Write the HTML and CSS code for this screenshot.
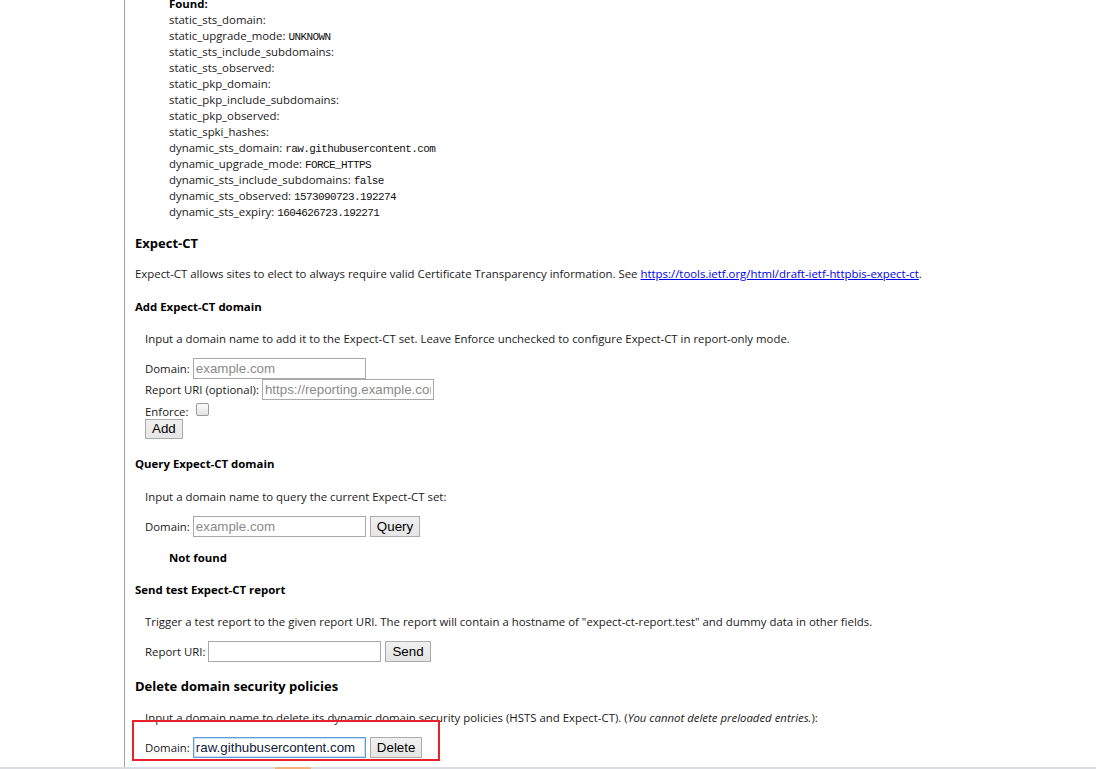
FILE: index.html
```html
<!DOCTYPE html>
<html lang="en">
<head>
<meta charset="utf-8">
<title>HSTS</title>
<link rel="stylesheet" href="styles.css">
</head>
<body>
<div class="frame">
  <aside class="sidebar"></aside>
  <main class="content">
    <div class="scroll">
      <div class="query-output">
        <div class="kv found">Found:</div>
        <div class="kv">static_sts_domain: </div>
        <div class="kv">static_upgrade_mode: <tt>UNKNOWN</tt></div>
        <div class="kv">static_sts_include_subdomains: </div>
        <div class="kv">static_sts_observed: </div>
        <div class="kv">static_pkp_domain: </div>
        <div class="kv">static_pkp_include_subdomains: </div>
        <div class="kv">static_pkp_observed: </div>
        <div class="kv">static_spki_hashes: </div>
        <div class="kv">dynamic_sts_domain: <tt>raw.githubusercontent.com</tt></div>
        <div class="kv">dynamic_upgrade_mode: <tt>FORCE_HTTPS</tt></div>
        <div class="kv">dynamic_sts_include_subdomains: <tt>false</tt></div>
        <div class="kv">dynamic_sts_observed: <tt>1573090723.192274</tt></div>
        <div class="kv">dynamic_sts_expiry: <tt>1604626723.192271</tt></div>
      </div>

      <h3 class="sec-title">Expect-CT</h3>
      <p class="sec-text">Expect-CT allows sites to elect to always require valid Certificate Transparency information. See <a class="link" href="#">https://tools.ietf.org/html/draft-ietf-httpbis-expect-ct</a>.</p>

      <h4 class="sub-title">Add Expect-CT domain</h4>
      <div class="sub-body">
        <p class="sub-text">Input a domain name to add it to the Expect-CT set. Leave Enforce unchecked to configure Expect-CT in report-only mode.</p>
        <div class="form">
          <div class="row">Domain: <input class="field" type="text" placeholder="example.com"></div>
          <div class="row">Report URI (optional): <input class="field field-uri" type="text" placeholder="https://reporting.example.com"></div>
          <div class="row row-check">Enforce: <input class="check" type="checkbox"></div>
          <div class="row row-btn"><button class="btn" type="button">Add</button></div>
        </div>
      </div>

      <h4 class="sub-title">Query Expect-CT domain</h4>
      <div class="sub-body">
        <p class="sub-text sub-text-loose">Input a domain name to query the current Expect-CT set:</p>
        <div class="form">
          <div class="row">Domain: <input class="field" type="text" placeholder="example.com"> <button class="btn" type="button">Query</button></div>
        </div>
        <div class="not-found">Not found</div>
      </div>

      <h4 class="sub-title sub-title-tight">Send test Expect-CT report</h4>
      <div class="sub-body">
        <p class="sub-text">Trigger a test report to the given report URI. The report will contain a hostname of "expect-ct-report.test" and dummy data in other fields.</p>
        <div class="form">
          <div class="row">Report URI: <input class="field" type="text"> <button class="btn" type="button">Send</button></div>
        </div>
      </div>

      <h3 class="sec-title sec-title-delete">Delete domain security policies</h3>
      <div class="sub-body">
        <p class="sub-text sub-text-delete">Input a domain name to delete its dynamic domain security policies (HSTS and Expect-CT). (<i>You cannot delete preloaded entries.</i>):</p>
        <div class="form">
          <div class="row row-annotated">Domain: <input class="field field-focus" type="text" value="raw.githubusercontent.com"> <button class="btn" type="button">Delete</button>
            <span class="annotation"></span>
          </div>
        </div>
      </div>
    </div>
  </main>
</div>
<div class="bottom-bar"><span class="bar-thumb"></span></div>
</body>
</html>
```

FILE: styles.css
```css
html, body {
  margin: 0;
  height: 100%;
  overflow: hidden;
  background: #ffffff;
}

body {
  display: flex;
  flex-direction: column;
  font-family: "Open Sans", "Segoe UI", "Noto Sans", sans-serif;
  font-size: 11.4px;
  line-height: 16px;
  color: #1a1a1a;
}

.frame {
  flex: 1;
  display: flex;
  min-height: 0;
}

.sidebar {
  flex: none;
  width: 124px;
  border-right: 1px solid #a3a3a3;
}

.content {
  flex: 1;
  min-width: 0;
  overflow: hidden;
  padding-left: 10px;
}

.scroll {
  margin-top: -4px;
}

.query-output {
  padding-left: 34px;
}

.kv {
  height: 16px;
  line-height: 16px;
  white-space: nowrap;
}

.found {
  font-weight: bold;
  color: #000;
}

tt {
  font-family: "Liberation Mono", "DejaVu Sans Mono", monospace;
  font-size: 11px;
  line-height: 0;
  letter-spacing: -0.6px;
  color: #111;
}

.sec-title {
  margin: 14px 0 0;
  font-size: 13px;
  font-weight: bold;
  line-height: 18px;
  color: #000;
}

.sec-title-delete {
  margin-top: 15px;
}

.sec-text {
  margin: 14px 0 0;
  white-space: nowrap;
}

.link {
  color: #0000ee;
  text-decoration: underline;
}

.sub-title {
  margin: 17px 0 0;
  font-size: 11.4px;
  font-weight: bold;
  line-height: 16px;
  color: #000;
}

.sub-title-tight {
  margin-top: 16px;
}

.sub-body {
  padding-left: 10px;
}

.sub-text {
  margin: 16px 0 0;
  white-space: nowrap;
}

.sub-text-loose {
  margin-top: 17px;
}

.sub-text-delete {
  margin-top: 15px;
}

.form {
  margin-top: 11px;
}

.row {
  display: flex;
  align-items: center;
  column-gap: 3px;
  height: 21px;
  white-space: nowrap;
}

.row-check {
  box-sizing: border-box;
  height: 19px;
  padding-top: 4px;
}

.row-btn {
  height: 20px;
}

.row-annotated {
  position: relative;
}

.field {
  box-sizing: border-box;
  width: 173px;
  height: 21px;
  margin: 0;
  padding: 1px 2px;
  border: 1px solid #a9a9a9;
  border-radius: 0;
  background: #fff;
  font-family: "Liberation Sans", Arial, sans-serif;
  font-size: 13.333px;
  color: #000;
  outline: none;
}

.field::placeholder {
  color: #8a8a8a;
}

.field-uri {
  width: 172px;
}

.field-focus {
  border-color: #5f9bdb;
  box-shadow: inset 0 0 0 1px #c9ddf3;
  color: #10203a;
}

.check {
  appearance: none;
  -webkit-appearance: none;
  box-sizing: border-box;
  width: 13px;
  height: 13px;
  margin: -4px 0 0 4px;
  border: 1px solid #9a9a9a;
  border-radius: 2px;
  background: linear-gradient(#fbfbfb, #e4e4e4);
}

.btn {
  box-sizing: border-box;
  height: 21px;
  margin: 0 0 0 1px;
  padding: 1px 6px;
  border: 1px solid #acacac;
  border-radius: 0;
  background: linear-gradient(#f0f0f0, #e5e5e5);
  font-family: "Liberation Sans", Arial, sans-serif;
  font-size: 13.333px;
  line-height: 17px;
  color: #000;
}

.row-btn .btn {
  margin-left: 0;
  height: 20px;
  line-height: 16px;
}

.not-found {
  margin-top: 13px;
  padding-left: 24px;
  font-weight: bold;
  color: #000;
}

.annotation {
  position: absolute;
  top: -17px;
  left: -13px;
  width: 308px;
  height: 41px;
  box-sizing: border-box;
  border: 2px solid #e8212b;
  pointer-events: none;
}

.bottom-bar {
  flex: none;
  height: 2px;
  background: #d9dce1;
}

.bar-thumb {
  display: block;
  width: 36px;
  height: 2px;
  margin-left: 275px;
  background: #f2b27a;
}
```
